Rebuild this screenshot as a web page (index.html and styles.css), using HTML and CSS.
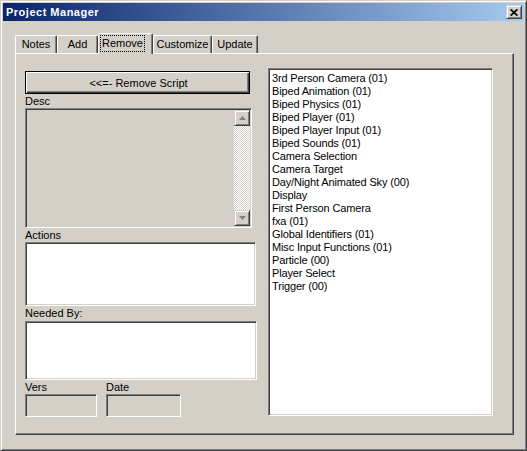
FILE: index.html
```html
<!DOCTYPE html>
<html>
<head>
<meta charset="utf-8">
<link rel="stylesheet" href="styles.css">
</head>
<body>
<div class="window">
  <div class="titlebar">
    <span class="title">Project Manager</span>
    <div class="close">
      <svg width="8" height="7" viewBox="0 0 8 7"><path d="M0.6 0.4 L7.4 6.6 M7.4 0.4 L0.6 6.6" stroke="#000" stroke-width="1.7" fill="none"/></svg>
    </div>
  </div>
  <div class="client">
    <div class="tabs">
      <div class="tab t-notes">Notes</div>
      <div class="tab t-add">Add</div>
      <div class="tab tab-active t-remove"><span class="focus">Remove</span></div>
      <div class="tab t-custom">Customize</div>
      <div class="tab t-update">Update</div>
    </div>
    <div class="page">
      <div class="left">
        <div class="btn-default">&lt;&lt;=- Remove Script</div>
        <div class="label">Desc</div>
        <div class="field disabled f-desc">
          <div class="field-text"></div>
          <div class="vscroll">
            <div class="sb-btn">
              <svg width="7" height="4" viewBox="0 0 7 4"><path d="M3.5 0 L7 4 L0 4 Z" fill="#808080"/></svg>
            </div>
            <div class="track"></div>
            <div class="sb-btn">
              <svg width="7" height="4" viewBox="0 0 7 4"><path d="M0 0 L7 0 L3.5 4 Z" fill="#808080"/></svg>
            </div>
          </div>
        </div>
        <div class="label">Actions</div>
        <div class="field f-actions"></div>
        <div class="label label-needed">Needed By:</div>
        <div class="field f-needed"></div>
        <div class="meta-row">
          <div class="meta meta-vers">
            <div class="label">Vers</div>
            <div class="field disabled f-small"></div>
          </div>
          <div class="meta meta-date">
            <div class="label">Date</div>
            <div class="field disabled f-small"></div>
          </div>
        </div>
      </div>
      <ul class="list">
        <li>3rd Person Camera (01)</li>
        <li>Biped Animation (01)</li>
        <li>Biped Physics (01)</li>
        <li>Biped Player (01)</li>
        <li>Biped Player Input (01)</li>
        <li>Biped Sounds (01)</li>
        <li>Camera Selection</li>
        <li>Camera Target</li>
        <li>Day/Night Animated Sky (00)</li>
        <li>Display</li>
        <li>First Person Camera</li>
        <li>fxa (01)</li>
        <li>Global Identifiers (01)</li>
        <li>Misc Input Functions (01)</li>
        <li>Particle (00)</li>
        <li>Player Select</li>
        <li>Trigger (00)</li>
      </ul>
    </div>
  </div>
</div>
</body>
</html>
```

FILE: styles.css
```css
html, body {
  margin: 0;
  padding: 0;
  background: #d4d0c8;
}

body {
  font-family: "Liberation Sans", Arial, sans-serif;
  font-size: 11px;
  color: #000;
}

.window {
  width: 527px;
  height: 451px;
  box-sizing: border-box;
  background: #d4d0c8;
  border: 1px solid;
  border-color: #d4d0c8 #404040 #404040 #d4d0c8;
  box-shadow: inset 1px 1px #fff, inset -1px -1px #808080;
  padding: 2px;
  display: flex;
  flex-direction: column;
}

.titlebar {
  height: 18px;
  flex: none;
  display: flex;
  align-items: center;
  padding-left: 3px;
  background: linear-gradient(to right, #0a246a, #a6caf0);
}

.title {
  color: #fff;
  font-weight: bold;
  font-size: 11px;
  letter-spacing: 0.5px;
}

.close {
  margin-left: auto;
  margin-right: 2px;
  width: 16px;
  height: 14px;
  box-sizing: border-box;
  background: #d4d0c8;
  border: 1px solid;
  border-color: #d4d0c8 #404040 #404040 #d4d0c8;
  box-shadow: inset 1px 1px #fff, inset -1px -1px #808080;
  display: flex;
  align-items: center;
  justify-content: center;
}

.close svg {
  display: block;
}

.client {
  flex: 1;
  display: flex;
  flex-direction: column;
  padding: 12px 10px 13px 12px;
  min-height: 0;
}

.tabs {
  display: flex;
  align-items: flex-end;
  height: 20px;
  flex: none;
}

.tab {
  height: 18px;
  box-sizing: border-box;
  border-top: 1px solid #fff;
  border-left: 1px solid #fff;
  border-right: 1px solid #404040;
  box-shadow: inset -1px 0 #808080;
  border-top-left-radius: 2px;
  border-top-right-radius: 2px;
  display: flex;
  align-items: center;
  justify-content: center;
  line-height: 13px;
}

.t-notes { width: 42px; }
.t-add { width: 41px; }
.t-remove { width: 55px; }
.t-custom { width: 59px; }
.t-update { width: 46px; }

.tab-active {
  height: 21px;
  margin-bottom: -1px;
  position: relative;
  z-index: 1;
  background: #d4d0c8;
  align-items: flex-start;
  justify-content: flex-start;
  padding-top: 1px;
  padding-left: 1px;
}

.focus {
  display: flex;
  align-items: center;
  justify-content: center;
  width: 45px;
  height: 17px;
  box-sizing: border-box;
  border: 1px dotted #000;
}

.page {
  flex: 1;
  box-sizing: border-box;
  border: 1px solid;
  border-color: #fff #404040 #404040 #fff;
  box-shadow: inset -1px -1px #808080;
  padding: 14px 0 0 9px;
  display: flex;
  align-items: flex-start;
}

.left {
  width: 232px;
  display: flex;
  flex-direction: column;
}

.btn-default {
  margin-top: 3px;
  width: 225px;
  height: 23px;
  box-sizing: border-box;
  border: 1px solid #000;
  box-shadow: inset 1px 1px #fff, inset -1px -1px #404040, inset -2px -2px #808080;
  display: flex;
  align-items: center;
  justify-content: center;
  padding-left: 2px;
}

.label {
  height: 14px;
  line-height: 15px;
  white-space: nowrap;
}

.label-needed {
  height: 15px;
  line-height: 15px;
}

.field {
  box-sizing: border-box;
  background: #fff;
  border: 1px solid;
  border-color: #808080 #fff #fff #808080;
  box-shadow: inset 1px 1px #404040, inset -1px -1px #d4d0c8;
}

.field.disabled {
  background: #d4d0c8;
}

.f-desc {
  width: 227px;
  height: 120px;
  display: flex;
  padding: 1px;
}

.field-text {
  flex: 1;
}

.vscroll {
  width: 16px;
  display: flex;
  flex-direction: column;
}

.sb-btn {
  width: 16px;
  height: 16px;
  flex: none;
  box-sizing: border-box;
  background: #d4d0c8;
  border: 1px solid;
  border-color: #d4d0c8 #404040 #404040 #d4d0c8;
  box-shadow: inset 1px 1px #fff, inset -1px -1px #808080;
  display: flex;
  align-items: center;
  justify-content: center;
}

.sb-btn svg {
  display: block;
}

.track {
  flex: 1;
  background: repeating-conic-gradient(#fff 0 25%, #d4d0c8 0 50%) 0 0 / 2px 2px;
}

.f-actions {
  width: 231px;
  height: 64px;
}

.f-needed {
  width: 232px;
  height: 59px;
}

.meta-row {
  display: flex;
}

.meta-vers {
  width: 72px;
}

.meta-date {
  width: 75px;
  margin-left: 9px;
}

.f-small {
  height: 23px;
}

.list {
  list-style: none;
  margin: 0 0 0 11px;
  width: 225px;
  height: 348px;
  box-sizing: border-box;
  background: #fff;
  border: 1px solid;
  border-color: #808080 #fff #fff #808080;
  box-shadow: inset 1px 1px #404040, inset -1px -1px #d4d0c8;
  padding: 3px 2px 0 3px;
  letter-spacing: -0.15px;
}

.list li {
  line-height: 13px;
  height: 13px;
  white-space: nowrap;
}
```
